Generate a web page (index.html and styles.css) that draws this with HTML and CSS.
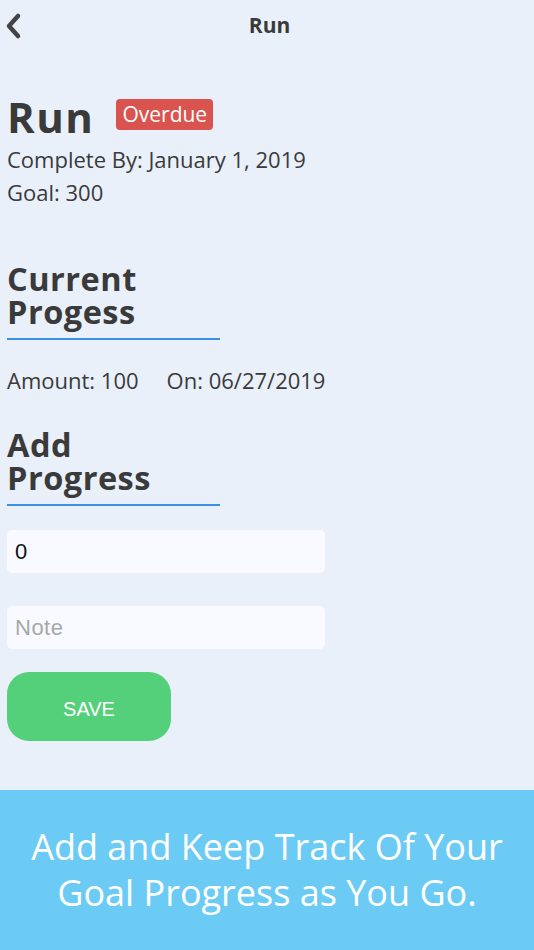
FILE: index.html
```html
<!DOCTYPE html>
<html lang="en">
<head>
    <meta charset="UTF-8">
    <meta name="viewport" content="width=device-width, initial-scale=1.0">
    <title>Run</title>
    <link rel="stylesheet" href="styles.css">
</head>
<body>
    <div class="screen">
        <div class="nav-bar">
            <a class="back-btn" href="#">
                <svg width="18" height="28" viewBox="0 0 18 28">
                    <path d="M14 4 L5 14 L14 24" fill="none" stroke="#444" stroke-width="4.5" stroke-linecap="round" stroke-linejoin="round"/>
                </svg>
            </a>
            <div class="nav-title">Run</div>
        </div>

        <div class="content">
            <div class="goal-header">
                <h1>Run</h1>
                <span class="badge">Overdue</span>
            </div>
            <div class="info">Complete By: January 1, 2019</div>
            <div class="info">Goal: 300</div>

            <h2 class="section-title">Current<br>Progess</h2>
            <div class="progress-row">
                <span>Amount: 100</span>
                <span>On: 06/27/2019</span>
            </div>

            <h2 class="section-title">Add<br>Progress</h2>
            <input type="text" class="field" value="0">
            <input type="text" class="field" placeholder="Note">
            <button class="save-btn">SAVE</button>
        </div>

        <div class="footer">
            Add and Keep Track Of Your<br>Goal Progress as You Go.
        </div>
    </div>
</body>
</html>
```

FILE: styles.css
```css
body {
    margin: 0;
    font-family: "Open Sans", sans-serif;
    background-color: #e9f0fa;
    color: #3a3a3a;
}
.screen {
    width: 534px;
    height: 950px;
    display: flex;
    flex-direction: column;
    overflow: hidden;
}
.nav-bar {
    position: relative;
    height: 50px;
    display: flex;
    align-items: center;
    justify-content: center;
}
.back-btn {
    position: absolute;
    left: 4px;
    top: 12px;
}
.nav-title {
    font-size: 21px;
    font-weight: 700;
    color: #3a3a3a;
    margin-left: 5px;
}
.content {
    flex: 1;
    padding: 0 7px;
}
.goal-header {
    display: flex;
    align-items: center;
    margin-top: 41px;
}
h1 {
    font-size: 42px;
    font-weight: 700;
    margin: 0;
    line-height: 52px;
    letter-spacing: 1.5px;
}
.badge {
    background-color: #d9534f;
    color: #fff;
    font-size: 21px;
    line-height: 31px;
    padding: 0 6px;
    border-radius: 4px;
    margin-left: 22px;
    margin-top: -6px;
}
.info {
    font-size: 22px;
    line-height: 33px;
}
.section-title {
    font-size: 32.5px;
    font-weight: 700;
    line-height: 33px;
    margin: 0;
    width: 213px;
    padding-bottom: 10px;
    border-bottom: 2.5px solid #3b8fe8;
    letter-spacing: 0.5px;
}
.info + .section-title {
    margin-top: 53px;
}
.progress-row {
    display: flex;
    gap: 28px;
    font-size: 22px;
    line-height: 30px;
    margin-top: 25px;
    margin-bottom: 33px;
}
.field {
    display: block;
    width: 318px;
    height: 43px;
    box-sizing: border-box;
    border: none;
    border-radius: 5px;
    background-color: #f8faff;
    font-family: "Liberation Sans", Arial, sans-serif;
    font-size: 22px;
    letter-spacing: 0.5px;
    padding: 0 8px;
    color: #111;
    outline: none;
}
.section-title + .field {
    margin-top: 24px;
}
.field + .field {
    margin-top: 33px;
}
.field::placeholder {
    color: #a8a8a8;
}
.save-btn {
    display: block;
    margin-top: 23px;
    width: 164px;
    height: 69px;
    padding-top: 6px;
    border: none;
    border-radius: 22px;
    background-color: #55d07a;
    color: #fff;
    font-family: "Liberation Sans", Arial, sans-serif;
    font-size: 20px;
    cursor: pointer;
}
.footer {
    height: 160px;
    background-color: #6ccbf5;
    color: #fff;
    font-size: 36px;
    line-height: 46px;
    text-align: center;
    display: flex;
    align-items: center;
    justify-content: center;
    box-sizing: border-box;
}
```
